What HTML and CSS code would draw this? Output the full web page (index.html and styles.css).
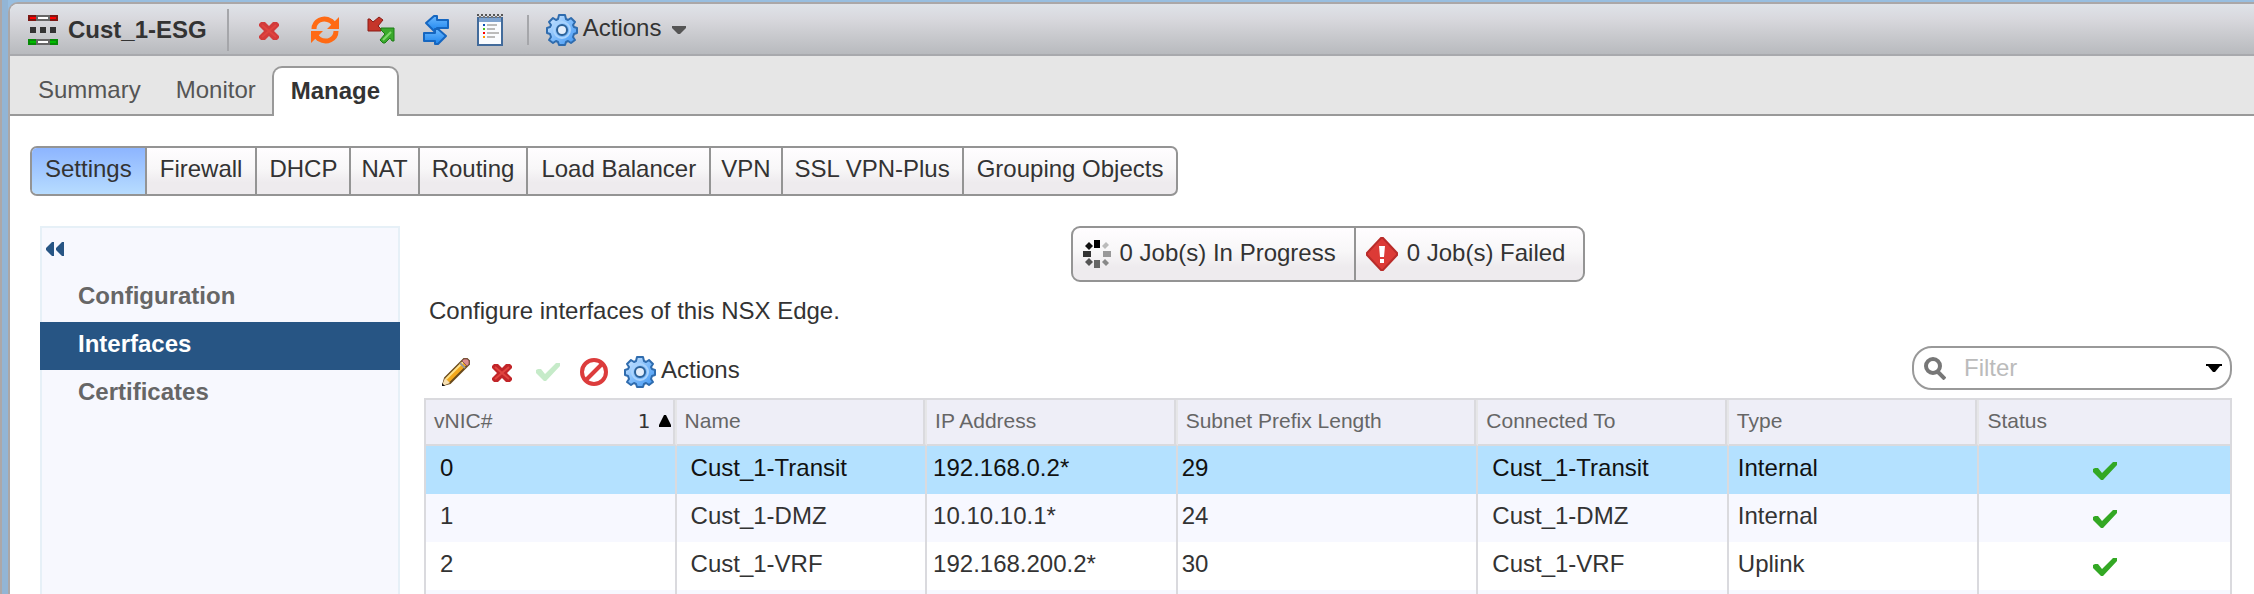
FILE: index.html
```html
<!DOCTYPE html>
<html lang="en">
<head>
<meta charset="utf-8">
<title>Cust_1-ESG</title>
<link rel="stylesheet" href="styles.css">
</head>
<body>
<svg class="defs" width="0" height="0" aria-hidden="true">
  <defs>
    <linearGradient id="gear-fill" x1="0" y1="0" x2="1" y2="1">
      <stop offset="0" stop-color="#d9ecff"/><stop offset=".5" stop-color="#7fbcfb"/><stop offset="1" stop-color="#3d94f2"/>
    </linearGradient>
    <linearGradient id="arrow-fill" x1="0" y1="0" x2="0" y2="1">
      <stop offset="0" stop-color="#6ab8ff"/><stop offset="1" stop-color="#1f86ee"/>
    </linearGradient>
    <symbol id="i-gear" viewBox="0 0 32 32">
      <path d="M13 1h6l1 4 2 1 3-2 4 4-2 3 1 2 3 1v5l-3 1-1 3 2 3-4 3-3-2-2 1-1 3h-6l-1-3-2-1-3 2-4-3 2-3-1-3-3-1v-5l3-1 1-2-2-3 4-4 3 2 2-1z" fill="url(#gear-fill)" stroke="#2f6cae" stroke-width="2" stroke-linejoin="round"/>
      <circle cx="16" cy="16" r="8" fill="none" stroke="#a9d3fd" stroke-width="2"/>
      <circle cx="16" cy="16" r="5" fill="#e4eefa" stroke="#2c6299" stroke-width="2"/>
    </symbol>
    <symbol id="i-delete" viewBox="0 0 20 18">
      <path d="M2 0h4l4 4 4-4h4l2 2v2l-5 5 5 5v2l-2 2h-4l-4-4-4 4H2l-2-2v-2l5-5-5-5V2z" fill="currentColor"/>
      <path d="M3 3l14 12M17 3L3 15" stroke="#e0443f" stroke-width="2"/>
    </symbol>
    <symbol id="i-check" viewBox="0 0 24 18">
      <path d="M0 7l2-1h3l4 5L20 0h4v3L10 18H8L0 10z" fill="currentColor"/>
    </symbol>
  </defs>
</svg>

<div class="window">
  <header class="titlebar">
    <svg class="edge-icon" width="30" height="30" viewBox="0 0 30 30" aria-hidden="true">
      <path fill="#7d1713" d="M0 0h30v6H0z"/><path fill="#f00" d="M2 2h6v2H2zM22 2h6v2h-6z"/>
      <path fill="#666" d="M8 0h14v6H8z"/><path fill="#fff" d="M10 2h10v2H10z"/>
      <path fill="#333" d="M2 12h6v6H2zM12 12h6v6h-6zM22 12h6v6h-6z"/>
      <path fill="#068a06" d="M0 24h30v6H0z"/><path fill="#0b0" d="M2 26h6v2H2zM22 26h6v2h-6z"/>
      <path fill="#666" d="M8 24h14v6H8z"/><path fill="#fff" d="M10 26h10v2H10z"/>
    </svg>
    <h1 class="title">Cust_1-ESG</h1>
    <span class="divider divider-tall"></span>
    <div class="title-tools">
      <button class="tool tool-delete" aria-label="Delete"><svg width="20" height="18"><use href="#i-delete"/></svg></button>
      <button class="tool" aria-label="Refresh">
        <svg width="28" height="28" viewBox="0 0 28 28" fill="none" stroke="#ff6a14" stroke-width="5">
          <path d="M3 13C3 5 12 0 20 5l3 3"/><path d="M25 15c0 8-9 13-17 8l-3-3"/>
          <path d="M28 1v12H16zM0 27V15h12z" fill="#ff6a14" stroke="none"/>
        </svg>
      </button>
      <button class="tool" aria-label="Redeploy">
        <svg width="28" height="28" viewBox="0 0 28 28" stroke-width="1" stroke-linejoin="round">
          <path d="M1 3h2l3 3 6-5 4 3-5 6 3 3v2H1z" fill="#c5352a" stroke="#8a1c14"/>
          <path d="M27 12v13h-2l-2-3-5 5h-2l-3-3 5-6-4-4v-2z" fill="#3aa92c" stroke="#1c7c16"/>
          <path d="M16 24l8-8" stroke="#7ed86c" stroke-width="2"/>
        </svg>
      </button>
      <button class="tool" aria-label="Force sync">
        <svg width="26" height="30" viewBox="0 0 26 30" fill="url(#arrow-fill)" stroke="#1566c0" stroke-width="2" stroke-linejoin="round">
          <path d="M3 8l8-7h3v4h11v8H14v3h-3z"/><path d="M23 21l-8-7h-3v4H1v8h11v3h3z"/>
        </svg>
      </button>
      <button class="tool" aria-label="Logs">
        <svg width="26" height="32" viewBox="0 0 26 32">
          <path d="M1 4h24v27H1z" fill="#fafcff" stroke="#426b9b" stroke-width="2"/>
          <path d="M2 4h22v4H2z" fill="#7fa3cf"/>
          <path d="M0 1h26" stroke="#555" stroke-width="2" stroke-dasharray="2 2"/><path d="M2 3h24" stroke="#777" stroke-width="2" stroke-dasharray="2 2"/>
          <path fill="#0a50b4" d="M6 10h2v2H6z"/><path fill="#4cc01c" d="M6 14h2v2H6z"/><path fill="#f00" d="M6 18h2v2H6z"/><path fill="#f90" d="M6 22h2v2H6z"/>
          <path fill="#bbb" d="M10 10h10v2H10zM10 14h8v2h-8zM10 18h12v2H10zM10 22h8v2h-8z"/>
        </svg>
      </button>
    </div>
    <span class="divider divider-short"></span>
    <button class="actions"><svg width="32" height="32"><use href="#i-gear"/></svg><span>Actions</span>
      <svg class="caret" width="14" height="8" viewBox="0 0 14 8"><path d="M0 0h14v2L8 8H6L0 2z" fill="#555"/></svg>
    </button>
  </header>

  <nav class="tabs">
    <a class="tab" href="#summary">Summary</a>
    <a class="tab" href="#monitor">Monitor</a>
    <a class="tab tab-active" href="#manage">Manage</a>
  </nav>

  <main class="page">
    <div class="segments">
      <button class="segment segment-wide segment-active">Settings</button>
      <button class="segment segment-wide">Firewall</button>
      <button class="segment">DHCP</button>
      <button class="segment segment-tight">NAT</button>
      <button class="segment">Routing</button>
      <button class="segment segment-wide">Load Balancer</button>
      <button class="segment segment-tight">VPN</button>
      <button class="segment">SSL VPN-Plus</button>
      <button class="segment segment-wide">Grouping Objects</button>
    </div>

    <div class="columns">
      <nav class="side">
        <button class="collapse" aria-label="Collapse">
          <svg width="18" height="14" viewBox="0 0 18 14" fill="#275584"><path d="M0 6l6-6h2v14H6L0 8zM10 6l6-6h2v14h-2l-6-6z"/></svg>
        </button>
        <a class="side-item" href="#configuration">Configuration</a>
        <a class="side-item side-active" href="#interfaces">Interfaces</a>
        <a class="side-item" href="#certificates">Certificates</a>
      </nav>

      <section class="content">
        <div class="jobs">
          <button class="job">
            <svg width="28" height="28" viewBox="0 0 28 28">
              <path fill="#000" d="M11 0h6v8h-6z"/><path fill="#bbb" d="M19 6l4-4 3 3-4 4z"/><path fill="#999" d="M20 11h8v6h-8z"/><path fill="#888" d="M22 19l4 4-3 3-4-4z"/>
              <path fill="#666" d="M11 20h6v8h-6z"/><path fill="#555" d="M6 18l4 4-4 4-4-4z"/><path fill="#333" d="M0 11h8v6H0z"/><path fill="#111" d="M6 2l4 4-4 4-4-4z"/>
            </svg><span>0 Job(s) In Progress</span>
          </button>
          <button class="job">
            <svg width="32" height="34" viewBox="0 0 32 34">
              <path d="M15 1h2l14 15v2L17 33h-2L1 18v-2z" fill="#dc3a36" stroke="#b92c2a" stroke-width="2"/>
              <path d="M13 9h6l-1 11h-4zM14 22h4v4h-4z" fill="#fff"/>
            </svg><span>0 Job(s) Failed</span>
          </button>
        </div>

        <p class="intro">Configure interfaces of this NSX Edge.</p>

        <div class="toolbar">
          <button class="tool" aria-label="Edit">
            <svg width="28" height="28" viewBox="0 0 28 28">
              <path d="M1 27l2-7L22 1h3l2 2v3L8 25z" fill="#f3a81c" stroke="#6a4a1c" stroke-width="2"/>
              <path d="M4 21L21 4" stroke="#ffe28a" stroke-width="2"/>
              <path d="M20 3l2-2h3l2 2v3l-2 2z" fill="#dc8d8d" stroke="#8d5757"/><path d="M18 5l5 5" stroke="#999" stroke-width="2"/>
              <path d="M3 20l5 5-5 2H1v-2z" fill="#f6dfb2"/><path d="M0 25l3 3H0z" fill="#111"/>
            </svg>
          </button>
          <button class="tool tool-remove" aria-label="Delete interface"><svg width="20" height="18"><use href="#i-delete"/></svg></button>
          <button class="tool tool-enable" aria-label="Connect" disabled><svg width="24" height="18"><use href="#i-check"/></svg></button>
          <button class="tool" aria-label="Disconnect">
            <svg width="28" height="28" viewBox="0 0 28 28" fill="none" stroke="#dc3c3c" stroke-width="4"><circle cx="14" cy="14" r="12"/><path d="M6 22L22 6"/></svg>
          </button>
          <button class="actions"><svg width="32" height="32"><use href="#i-gear"/></svg><span>Actions</span></button>
          <div class="filter">
            <svg width="22" height="23" viewBox="0 0 22 23" fill="none" stroke="#777" stroke-width="4"><circle cx="9" cy="9" r="7"/><path d="M14 15l7 7"/></svg>
            <input class="filter-input" type="text" placeholder="Filter" aria-label="Filter">
            <button class="tool" aria-label="Filter options"><svg width="16" height="8" viewBox="0 0 16 8"><path d="M0 0h16v2h-2L9 8H7L2 2H0z" fill="#000"/></svg></button>
          </div>
        </div>

        <table class="grid">
          <colgroup><col class="w-mid"><col class="w-mid"><col class="w-mid"><col class="w-wide"><col class="w-mid"><col class="w-mid"><col class="w-mid"></colgroup>
          <thead>
            <tr>
              <th><div class="sort-head"><span>vNIC#</span><span class="sort">1<svg width="12" height="12" viewBox="0 0 12 12"><path d="M5 0h2l5 10v2H0v-2z" fill="#000"/></svg></span></div></th>
              <th>Name</th><th>IP Address</th><th>Subnet Prefix Length</th><th>Connected To</th><th>Type</th><th>Status</th>
            </tr>
          </thead>
          <tbody>
            <tr class="selected"><td>0</td><td>Cust_1-Transit</td><td>192.168.0.2*</td><td>29</td><td>Cust_1-Transit</td><td>Internal</td><td><svg class="ok" width="24" height="18" role="img" aria-label="Connected"><use href="#i-check"/></svg></td></tr>
            <tr><td>1</td><td>Cust_1-DMZ</td><td>10.10.10.1*</td><td>24</td><td>Cust_1-DMZ</td><td>Internal</td><td><svg class="ok" width="24" height="18" role="img" aria-label="Connected"><use href="#i-check"/></svg></td></tr>
            <tr><td>2</td><td>Cust_1-VRF</td><td>192.168.200.2*</td><td>30</td><td>Cust_1-VRF</td><td>Uplink</td><td><svg class="ok" width="24" height="18" role="img" aria-label="Connected"><use href="#i-check"/></svg></td></tr>
            <tr><td></td><td></td><td></td><td></td><td></td><td></td><td></td></tr>
          </tbody>
        </table>
      </section>
    </div>
  </main>
</div>
</body>
</html>
```
FILE: styles.css
```css
* {
  box-sizing: border-box;
}

body {
  margin: 0;
  height: 100vh;
  overflow: hidden;
  padding: 2px 0 0 8px;
  background: linear-gradient(to right, #aca7a8 2px, #93b5d5 2px, #93b5d5 8px, #98bee0 8px);
  font: 24px/28px "Liberation Sans", Arial, sans-serif;
  color: #333;
}

button {
  margin: 0;
  padding: 0;
  border: 0;
  background: none;
  font: inherit;
  color: inherit;
}

a {
  color: inherit;
  text-decoration: none;
}

svg {
  display: block;
  flex: none;
}

.defs {
  position: absolute;
}

.window {
  display: flex;
  flex-direction: column;
  height: 100%;
  border: 2px solid #aaa7a8;
  border-width: 2px 0 0 2px;
  border-radius: 10px 0 0 0;
  background: #fff;
  overflow: hidden;
}

.titlebar {
  display: flex;
  align-items: center;
  flex: none;
  height: 52px;
  padding: 2px 18px 0;
  border-bottom: 2px solid #a8a9ad;
  background: linear-gradient(#dfe3e9, #d8d8dd 30%, #c8c9cd 65%, #b8babe);
}

.title {
  margin: 0 20px 0 10px;
  font-size: 24px;
  line-height: 28px;
}

.divider {
  width: 2px;
  background: #a5a6aa;
}

.divider-tall {
  height: 42px;
}

.divider-short {
  height: 30px;
}

.title-tools {
  display: flex;
  align-items: center;
  gap: 28px;
  padding: 0 24px 0 30px;
}

.tool {
  display: flex;
}

.tool-delete {
  padding: 2px 4px 0 0;
  color: #d23b3b;
}

.actions {
  display: flex;
  align-items: center;
  gap: 5px;
}

.titlebar .actions {
  margin-left: 17px;
}

.actions span {
  padding-bottom: 4px;
}

.caret {
  margin-left: 6px;
}

.tabs {
  display: flex;
  align-items: flex-end;
  flex: none;
  height: 60px;
  padding-left: 28px;
  background: linear-gradient(#e6e6e6 58px, #999 58px);
}

.tab {
  padding: 0 18px 12px;
  color: #555;
}

.tab:first-child {
  padding-left: 0;
  padding-right: 17px;
}

.tab-active {
  height: 50px;
  margin-left: -2px;
  padding: 9px 17px 0;
  border: 2px solid #999;
  border-bottom: 0;
  border-radius: 10px 10px 0 0;
  background: #fff;
  font-weight: bold;
  color: #333;
}

.page {
  display: flex;
  flex-direction: column;
  flex: 1;
  min-height: 0;
  padding: 30px 22px 0 20px;
}

.segments,
.jobs {
  display: flex;
  border: 2px solid #949494;
  overflow: hidden;
  background: linear-gradient(#fffdff, #f8f7f8 45%, #eeebee 75%, #eeebee);
}

.segments {
  align-self: flex-start;
  flex: none;
  height: 50px;
  border-radius: 7px;
}

.segment {
  padding: 0 12px 4px;
  border-right: 2px solid #949494;
}

.segment-wide {
  padding: 0 13px 4px;
}

.segment-tight {
  padding: 0 10px 4px;
}

.segment:last-child {
  border-right: 0;
}

.segment-active {
  background: linear-gradient(#8db5ff, #b7dcff);
}

.columns {
  display: flex;
  flex: 1;
  gap: 24px;
  min-height: 0;
  padding: 30px 0 0 10px;
}

.side {
  display: flex;
  flex-direction: column;
  flex: none;
  width: 360px;
  border: 2px solid #e6f0f7;
  border-bottom: 0;
  background: #f7f8fe;
  font-weight: bold;
  color: #666;
}

.collapse {
  display: flex;
  align-items: center;
  height: 42px;
  margin-bottom: 4px;
  padding: 0 4px;
}

.side-item {
  margin: 0 -2px;
  padding: 8px 38px 12px;
}

.side-active {
  background: #275584;
  color: #fff;
}

.content {
  display: flex;
  flex-direction: column;
  flex: 1;
  min-width: 0;
}

.jobs {
  align-self: center;
  flex: none;
  height: 56px;
  border-radius: 9px;
  white-space: nowrap;
}

.job {
  display: flex;
  align-items: center;
  gap: 9px;
  padding: 0 18px 0 10px;
}

.job span {
  padding-bottom: 2px;
}

.job + .job {
  border-left: 2px solid #949494;
}

.intro {
  margin: 15px 5px 0;
}

.toolbar {
  display: flex;
  align-items: center;
  flex: none;
  height: 48px;
  margin: 17px 0 8px;
  padding: 12px 0 0 18px;
  gap: 20px;
}

.tool-remove {
  padding: 2px 4px 0 2px;
  color: #c12529;
}

.tool-enable {
  color: #c6ebc9;
}

.toolbar .actions {
  margin-left: -4px;
}

.filter {
  display: flex;
  align-items: center;
  align-self: flex-end;
  width: 320px;
  height: 44px;
  margin: 0 0 0 auto;
  padding: 0 8px 0 10px;
  border: 2px solid #999;
  border-radius: 20px;
  background: #fff;
}

.filter-input {
  flex: 1;
  min-width: 0;
  margin-left: 18px;
  padding: 0;
  border: 0;
  outline: 0;
  background: none;
  font: inherit;
}

.filter-input::placeholder {
  color: #bbb;
  opacity: 1;
}

.grid {
  width: 100%;
  table-layout: fixed;
  border: 2px solid #dadade;
  border-bottom: 0;
  border-spacing: 0;
}

.w-mid {
  width: 250px;
}

.w-wide {
  width: 300px;
}

.grid th {
  height: 46px;
  padding: 0 4px 2px 8px;
  border-right: 2px solid #e6e6e8;
  border-bottom: 2px solid #dadade;
  background: #eeeef7;
  box-shadow: inset -2px 0 #dadade;
  font-size: 21px;
  font-weight: normal;
  text-align: left;
  color: #666;
}

.grid th:last-child {
  border-right: 0;
  box-shadow: none;
}

.sort-head,
.sort {
  display: flex;
  align-items: center;
  justify-content: space-between;
}

.sort {
  gap: 8px;
  font-family: "DejaVu Sans", sans-serif;
  font-size: 20px;
  color: #333;
}

.grid td {
  height: 48px;
  padding: 0 9px 4px;
  border-right: 2px solid #dadade;
}

.grid td:nth-child(1) {
  padding-left: 14px;
}

.grid td:nth-child(2),
.grid td:nth-child(5) {
  padding-left: 14px;
}

.grid td:nth-child(3) {
  padding-left: 6px;
}

.grid td:nth-child(4) {
  padding-left: 4px;
}

.grid td:last-child {
  padding: 2px 0 0;
  border-right: 0;
}

.grid tr:nth-child(even) td {
  background: #f7f8ff;
}

.grid .selected td {
  background: #b4e1ff;
  color: #111;
}

.ok {
  margin: 0 auto;
  color: #33a824;
}
```
